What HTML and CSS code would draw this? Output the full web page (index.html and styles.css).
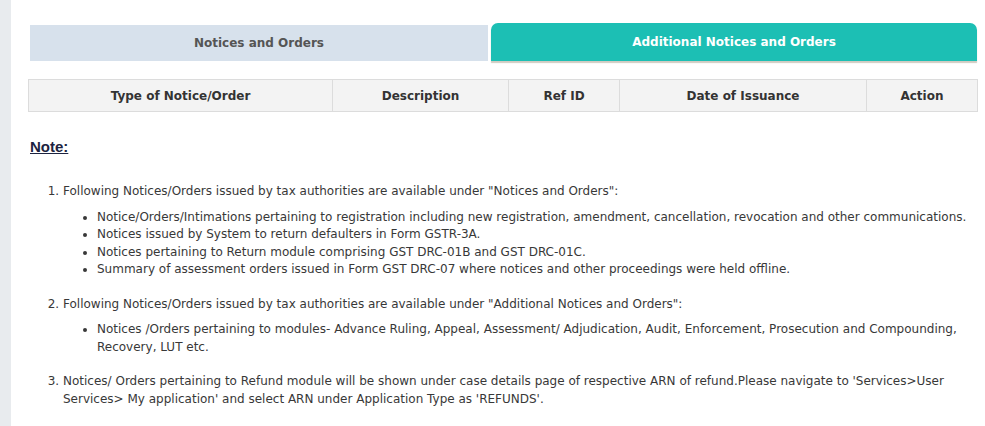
FILE: index.html
```html
<!DOCTYPE html>
<html>
<head>
<meta charset="utf-8">
<link rel="stylesheet" href="styles.css">
</head>
<body>
<div class="page">
  <aside class="rail"></aside>
  <main class="content">
    <div class="tabs">
      <div class="tab tab-inactive">Notices and Orders</div>
      <div class="tab tab-active">Additional Notices and Orders</div>
    </div>
    <table class="grid">
      <colgroup>
        <col class="c1"><col class="c2"><col class="c3"><col class="c4"><col class="c5">
      </colgroup>
      <thead>
        <tr>
          <th>Type of Notice/Order</th>
          <th>Description</th>
          <th>Ref ID</th>
          <th>Date of Issuance</th>
          <th>Action</th>
        </tr>
      </thead>
    </table>
    <h4 class="note">Note:</h4>
    <ol class="notes">
      <li>Following Notices/Orders issued by tax authorities are available under "Notices and Orders":
        <ul>
          <li>Notice/Orders/Intimations pertaining to registration including new registration, amendment, cancellation, revocation and other communications.</li>
          <li>Notices issued by System to return defaulters in Form GSTR-3A.</li>
          <li>Notices pertaining to Return module comprising GST DRC-01B and GST DRC-01C.</li>
          <li>Summary of assessment orders issued in Form GST DRC-07 where notices and other proceedings were held offline.</li>
        </ul>
      </li>
      <li>Following Notices/Orders issued by tax authorities are available under "Additional Notices and Orders":
        <ul>
          <li>Notices /Orders pertaining to modules- Advance Ruling, Appeal, Assessment/ Adjudication, Audit, Enforcement, Prosecution and Compounding, Recovery, LUT etc.</li>
        </ul>
      </li>
      <li>Notices/ Orders pertaining to Refund module will be shown under case details page of respective ARN of refund.Please navigate to 'Services&gt;User Services&gt; My application' and select ARN under Application Type as 'REFUNDS'.</li>
    </ol>
  </main>
</div>
</body>
</html>
```

FILE: styles.css
```css
html, body {
  margin: 0;
  padding: 0;
  background: #fff;
}
body {
  font-family: "DejaVu Sans", Verdana, sans-serif;
  color: #333;
}
.page {
  display: flex;
  min-height: 426px;
}
.rail {
  width: 11px;
  flex: none;
  background: #e8ebee;
}
.content {
  flex: 1;
  padding: 23px 8px 0 17px;
}
.tabs {
  display: flex;
  align-items: flex-end;
  margin: 0 1px 0 2px;
  gap: 3px;
}
.tab {
  text-align: center;
  font-weight: bold;
  font-size: 12px;
}
.tab-inactive {
  flex: 0 0 458px;
  background: #d7e1ec;
  color: #555;
  height: 36px;
  line-height: 36px;
}
.tab-active {
  flex: 1;
  background: #1cbfb4;
  color: #fff;
  height: 38px;
  line-height: 38px;
  border-radius: 7px 7px 0 0;
  box-shadow: 0 2px 1px rgba(120, 110, 80, 0.35);
}
.grid {
  width: 949px;
  table-layout: fixed;
  border-collapse: collapse;
  margin-top: 18px;
}
.grid th {
  background: #f3f3f3;
  border: 1px solid #dcdcdc;
  height: 31px;
  padding: 0;
  font-size: 12px;
  font-weight: bold;
  color: #333;
}
.c1 { width: 304px; }
.c2 { width: 176px; }
.c3 { width: 111px; }
.c4 { width: 247px; }
.c5 { width: 111px; }
.note {
  margin: 26px 0 0 2px;
  font-family: "Liberation Sans", Arial, sans-serif;
  font-size: 15px;
  color: #1c2340;
  text-decoration: underline;
  font-weight: bold;
}
.notes {
  margin: 28px 0 0;
  padding-left: 35px;
  font-size: 12px;
  line-height: 17.5px;
  color: #383838;
}
.notes > li {
  margin-bottom: 17px;
}
.notes ul {
  margin: 8px 0 0;
  padding-left: 34px;
  list-style: disc;
}
```
